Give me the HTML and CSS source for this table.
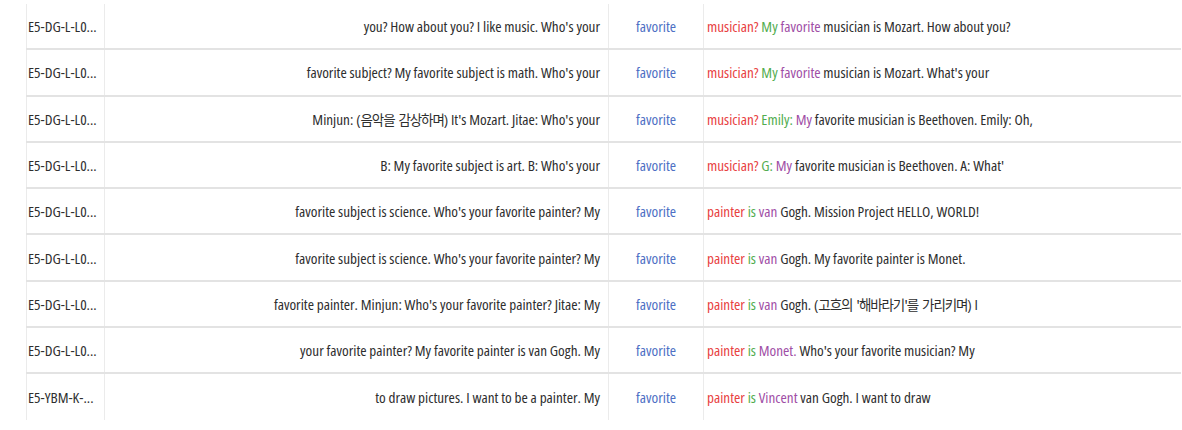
FILE: index.html
```html
<!DOCTYPE html>
<html lang="en">
<head>
<meta charset="utf-8">
<title>Concordance</title>
<link rel="stylesheet" href="styles.css">
</head>
<body>
<div class="wrap">
<table class="kwic">
  <colgroup>
    <col class="c-id"><col class="c-left"><col class="c-key"><col class="c-right">
  </colgroup>
  <tbody>
    <tr>
      <td class="id">E5-DG-L-L0...</td>
      <td class="left">you? How about you? I like music. Who's your</td>
      <td class="key">favorite</td>
      <td class="right"><span class="r1">musician?</span> <span class="r2">My</span> <span class="r3">favorite</span> musician is Mozart. How about you?</td>
    </tr>
    <tr>
      <td class="id">E5-DG-L-L0...</td>
      <td class="left">favorite subject? My favorite subject is math. Who's your</td>
      <td class="key">favorite</td>
      <td class="right"><span class="r1">musician?</span> <span class="r2">My</span> <span class="r3">favorite</span> musician is Mozart. What's your</td>
    </tr>
    <tr>
      <td class="id">E5-DG-L-L0...</td>
      <td class="left">Minjun: (<span class="ko">음악을 감상하며</span>) It's Mozart. Jitae: Who's your</td>
      <td class="key">favorite</td>
      <td class="right"><span class="r1">musician?</span> <span class="r2">Emily:</span> <span class="r3">My</span> favorite musician is Beethoven. Emily: Oh,</td>
    </tr>
    <tr>
      <td class="id">E5-DG-L-L0...</td>
      <td class="left">B: My favorite subject is art. B: Who's your</td>
      <td class="key">favorite</td>
      <td class="right"><span class="r1">musician?</span> <span class="r2">G:</span> <span class="r3">My</span> favorite musician is Beethoven. A: What'</td>
    </tr>
    <tr>
      <td class="id">E5-DG-L-L0...</td>
      <td class="left">favorite subject is science. Who's your favorite painter? My</td>
      <td class="key">favorite</td>
      <td class="right"><span class="r1">painter</span> <span class="r2">is</span> <span class="r3">van</span> Gogh. Mission Project HELLO, WORLD!</td>
    </tr>
    <tr>
      <td class="id">E5-DG-L-L0...</td>
      <td class="left">favorite subject is science. Who's your favorite painter? My</td>
      <td class="key">favorite</td>
      <td class="right"><span class="r1">painter</span> <span class="r2">is</span> <span class="r3">van</span> Gogh. My favorite painter is Monet.</td>
    </tr>
    <tr>
      <td class="id">E5-DG-L-L0...</td>
      <td class="left">favorite painter. Minjun: Who's your favorite painter? Jitae: My</td>
      <td class="key">favorite</td>
      <td class="right"><span class="r1">painter</span> <span class="r2">is</span> <span class="r3">van</span> Gogh. (<span class="ko">고흐의 '해바라기'를 가리키며</span>) I</td>
    </tr>
    <tr>
      <td class="id">E5-DG-L-L0...</td>
      <td class="left">your favorite painter? My favorite painter is van Gogh. My</td>
      <td class="key">favorite</td>
      <td class="right"><span class="r1">painter</span> <span class="r2">is</span> <span class="r3">Monet.</span> Who's your favorite musician? My</td>
    </tr>
    <tr>
      <td class="id">E5-YBM-K-...</td>
      <td class="left">to draw pictures. I want to be a painter. My</td>
      <td class="key">favorite</td>
      <td class="right"><span class="r1">painter</span> <span class="r2">is</span> <span class="r3">Vincent</span> van Gogh. I want to draw</td>
    </tr>
  </tbody>
</table>
</div>
</body>
</html>
```
FILE: styles.css
```css
html, body {
  margin: 0;
  padding: 0;
  background: #ffffff;
}
.wrap {
  padding: 4px 2px 0 26px;
}
.kwic {
  border-collapse: collapse;
  table-layout: fixed;
  width: 1154px;
  font-family: "Open Sans", "Noto Sans CJK KR", sans-serif;
  font-stretch: 75%;
  font-size: 15.2px;
  color: #2e2e2e;
}
.c-id { width: 78px; }
.c-left { width: 504px; }
.c-key { width: 95px; }
.c-right { width: 477px; }
.kwic td {
  height: 44.3px;
  padding: 0;
  white-space: nowrap;
  overflow: hidden;
  vertical-align: middle;
  border-left: 1px solid #ebebeb;
  border-bottom: 2px solid #e3e3e3;
}
.kwic tr:last-child td {
  border-bottom: none;
  height: 46px;
}
.kwic td.id {
  padding-left: 1px;
}
.left {
  text-align: right;
  padding-right: 8px !important;
}
.key {
  text-align: center;
  color: #4d6fc4;
}
.right {
  padding-left: 3px !important;
}
.ko {
  font-family: "Noto Sans CJK KR", sans-serif;
  font-size: 13.5px;
  letter-spacing: -1.1px;
  word-spacing: 2px;
}
.r1 { color: #e8413f; }
.r2 { color: #52ad4f; }
.r3 { color: #a04ea6; }
```
